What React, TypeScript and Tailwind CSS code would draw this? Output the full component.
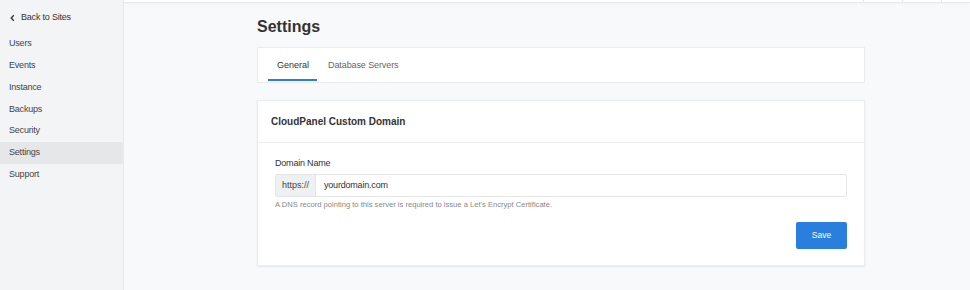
const menu = ['Users', 'Events', 'Instance', 'Backups', 'Security', 'Settings', 'Support']

function Sidebar() {
  return (
    <aside className="w-[124px] shrink-0 border-r border-[#e8e9ea] bg-[#f3f4f5]">
      <a className="flex h-[33px] items-center gap-[5px] pl-[9px] pt-[2px] text-[9px] tracking-[-0.2px] text-[#333]">
        <svg width="7" height="8" viewBox="0 0 7 8">
          <path d="M4.8 1.3 2.2 4l2.6 2.7" fill="none" stroke="#333" strokeWidth="1.3" />
        </svg>
        Back to Sites
      </a>
      <nav className="flex flex-col">
        {menu.map(item => (
          <a
            key={item}
            className={
              'flex h-[21.8px] items-center pl-[9px] text-[9px] tracking-[-0.2px] text-[#444] ' +
              (item === 'Settings' ? 'bg-[#e6e7e8]' : '')
            }
          >
            {item}
          </a>
        ))}
      </nav>
    </aside>
  )
}

export default function App() {
  return (
    <div className="flex h-[290px] w-[970px] overflow-hidden bg-[#f8f9fa] font-['Liberation_Sans',Arial,sans-serif]">
      <Sidebar />
      <main className="flex flex-1 flex-col">
        <div className="flex h-[3px] justify-end border-b border-[#e9eaeb] bg-white shadow-[0_1px_2px_rgba(0,0,0,0.04)]">
          <div className="w-[39px] border-l border-[#e6e7e8]" />
          <div className="w-[39px] border-l border-[#e6e7e8]" />
          <div className="w-[29px] border-l border-[#e6e7e8]" />
        </div>

        <div className="w-[608px] pl-[133px] box-content">
          <h1 className="mt-[14px] h-[26px] text-[16px] leading-[20px] font-bold text-[#333]">Settings</h1>

          <div className="mt-[4px] flex h-[36px] items-stretch border border-[#ebecee] bg-white pl-[10px]">
            <div className="flex flex-col justify-center">
              <span className="flex flex-1 items-center pl-[9px] pr-[8px] pt-[4px] text-[9px] text-[#333]">General</span>
              <span className="mb-[1px] h-[2px] bg-[#2a7fde]" />
            </div>
            <span className="flex items-center pl-[11px] pt-[1px] text-[9px] tracking-[-0.1px] text-[#666]">Database Servers</span>
          </div>

          <div className="mt-[17px] border border-[#ebecee] bg-white shadow-[0_1px_2px_rgba(0,0,0,0.08)]">
            <div className="flex h-[42px] items-center border-b border-[#ebecee] px-[13px] text-[10px] font-bold text-[#333]">
              CloudPanel Custom Domain
            </div>
            <div className="px-[17px] pb-[16px] pt-[14px]">
              <label className="block text-[9px] leading-[12px] tracking-[-0.2px] text-[#333]">Domain Name</label>
              <div className="mt-[5px] flex h-[23px] rounded-[2px] border border-[#e3e5e7]">
                <span className="flex w-[40px] items-center justify-center border-r border-[#e3e5e7] bg-[#eef0f2] text-[9px] text-[#444]">
                  https://
                </span>
                <span className="flex items-center pl-[8px] text-[9px] tracking-[-0.2px] text-[#333]">yourdomain.com</span>
              </div>
              <p className="mt-[3px] text-[7.6px] leading-[10px] text-[#888]">
                A DNS record pointing to this server is required to issue a Let's Encrypt Certificate.
              </p>
              <div className="mt-[12px] flex justify-end">
                <button className="h-[27px] w-[51px] rounded-[2px] bg-[#2a7fde] text-[8.5px] text-white">Save</button>
              </div>
            </div>
          </div>
        </div>
      </main>
    </div>
  )
}
